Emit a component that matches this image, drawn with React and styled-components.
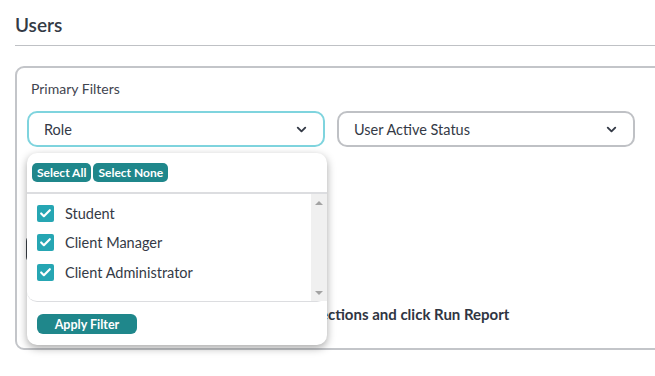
import styled, { createGlobalStyle } from "styled-components";
import { ChevronDown, Check } from "lucide-react";

const GlobalStyle = createGlobalStyle`
  body {
    margin: 0;
    background: #fff;
    font-family: "Lato", "Noto Sans", sans-serif;
    color: #2f3542;
  }
`;

const Page = styled.div`
  width: 655px;
  height: 376px;
  overflow: hidden;
  padding-left: 15px;
  box-sizing: border-box;
`;

const Title = styled.h1`
  margin: 0;
  padding-top: 13px;
  height: 46px;
  box-sizing: border-box;
  font-size: 19px;
  font-weight: 600;
  color: #333a45;
  border-bottom: 1px solid #bfc1c5;
`;

const Card = styled.div`
  margin-top: 20px;
  width: 680px;
  height: 284px;
  box-sizing: border-box;
  border: 2px solid #c3c5c9;
  border-radius: 9px;
  padding: 12px 10px 0 10px;
  display: flex;
  flex-direction: column;
`;

const Label = styled.div`
  font-size: 14px;
  color: #3f4550;
  padding-left: 4px;
  height: 18px;
  line-height: 18px;
`;

const FilterRow = styled.div`
  margin-top: 13px;
  display: flex;
  gap: 12px;
`;

const SelectWrap = styled.div`
  position: relative;
`;

const Select = styled.div`
  width: 298px;
  height: 36px;
  box-sizing: border-box;
  border: 2px solid ${({ $active }) => ($active ? "#7fd4de" : "#bfc1c5")};
  border-radius: 10px;
  padding: 0 14px 0 15px;
  display: flex;
  align-items: center;
  justify-content: space-between;
  font-size: 14.5px;
  color: #343a46;
`;

const Panel = styled.div`
  position: absolute;
  top: 42px;
  left: 0;
  width: 300px;
  height: 192px;
  background: #fff;
  border-radius: 10px;
  box-shadow: 0 3px 8px rgba(0, 0, 0, 0.35);
  display: flex;
  flex-direction: column;
  z-index: 2;
`;

const PanelTop = styled.div`
  display: flex;
  gap: 2px;
  padding: 10px 5px;
  border-bottom: 2px solid #dcdde0;
`;

const SmallButton = styled.button`
  border: none;
  background: #1f878b;
  color: #fff;
  font-family: inherit;
  font-size: 12px;
  font-weight: 700;
  height: 19px;
  padding: 0 5px;
  border-radius: 5px;
`;

const List = styled.div`
  height: 108px;
  display: flex;
  border-bottom: 1px solid #dcdde0;
  border-radius: 0 0 10px 10px;
`;

const Items = styled.div`
  flex: 1;
  padding-top: 10px;
  display: flex;
  flex-direction: column;
  gap: 11.5px;
`;

const Item = styled.label`
  display: flex;
  align-items: center;
  gap: 11px;
  padding-left: 10px;
  font-size: 14.5px;
  color: #343a46;
  height: 18px;
`;

const Box = styled.span`
  width: 17px;
  height: 17px;
  border-radius: 2px;
  background: #26a6b3;
  display: flex;
  align-items: center;
  justify-content: center;
  color: #fff;
`;

const Scrollbar = styled.div`
  width: 16px;
  background: #f0f0f0;
  display: flex;
  flex-direction: column;
  justify-content: space-between;
  align-items: center;
  padding: 7px 0 6px;
`;

const Arrow = styled.span`
  width: 0;
  height: 0;
  border-left: 4px solid transparent;
  border-right: 4px solid transparent;
  ${({ $down }) =>
    $down ? "border-top: 4px solid #a3a3a3;" : "border-bottom: 4px solid #a3a3a3;"}
`;

const PanelFoot = styled.div`
  padding: 11px 10px;
`;

const ApplyButton = styled.button`
  border: none;
  background: #1f878b;
  color: #fff;
  font-family: inherit;
  font-size: 12.5px;
  font-weight: 700;
  width: 100px;
  height: 20px;
  border-radius: 6px;
`;

const RunButton = styled.button`
  margin-top: 88px;
  margin-left: -1px;
  align-self: flex-start;
  border: none;
  background: #3a3f47;
  height: 28px;
  width: 110px;
  border-radius: 6px;
`;

const Message = styled.div`
  margin-top: 42px;
  margin-left: 155px;
  font-size: 15px;
  font-weight: 700;
  color: #2f3542;
`;

const roles = ["Student", "Client Manager", "Client Administrator"];

export default function App() {
  return (
    <Page>
      <GlobalStyle />
      <Title>Users</Title>
      <Card>
        <Label>Primary Filters</Label>
        <FilterRow>
          <SelectWrap>
            <Select $active>
              Role
              <ChevronDown size={15} strokeWidth={3} />
            </Select>
            <Panel>
              <PanelTop>
                <SmallButton>Select All</SmallButton>
                <SmallButton>Select None</SmallButton>
              </PanelTop>
              <List>
                <Items>
                  {roles.map((r) => (
                    <Item key={r}>
                      <Box>
                        <Check size={13} strokeWidth={4} />
                      </Box>
                      {r}
                    </Item>
                  ))}
                </Items>
                <Scrollbar>
                  <Arrow />
                  <Arrow $down />
                </Scrollbar>
              </List>
              <PanelFoot>
                <ApplyButton>Apply Filter</ApplyButton>
              </PanelFoot>
            </Panel>
          </SelectWrap>
          <Select>
            User Active Status
            <ChevronDown size={15} strokeWidth={3} />
          </Select>
        </FilterRow>
        <RunButton aria-label="Run Report" />
        <Message>Please make your selections and click Run Report</Message>
      </Card>
    </Page>
  );
}
